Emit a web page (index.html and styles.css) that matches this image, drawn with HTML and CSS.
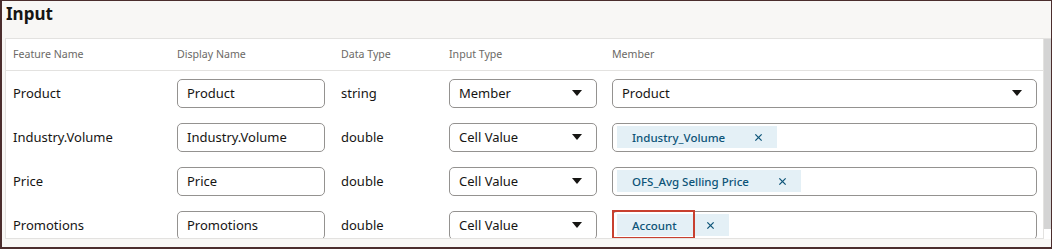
FILE: index.html
```html
<!DOCTYPE html>
<html>
<head>
<meta charset="utf-8">
<link rel="stylesheet" href="styles.css">
</head>
<body>
<div class="frame">
  <div class="title">Input</div>
  <div class="panel">
    <div class="table">
      <div class="row head">
        <div class="cell">Feature Name</div>
        <div class="cell">Display Name</div>
        <div class="cell">Data Type</div>
        <div class="cell">Input Type</div>
        <div class="cell">Member</div>
      </div>
      <div class="row">
        <div class="cell">Product</div>
        <div class="cell"><div class="field">Product</div></div>
        <div class="cell">string</div>
        <div class="cell"><div class="field select">Member<span class="caret"></span></div></div>
        <div class="cell"><div class="field select wide">Product<span class="caret"></span></div></div>
      </div>
      <div class="row">
        <div class="cell">Industry.Volume</div>
        <div class="cell"><div class="field">Industry.Volume</div></div>
        <div class="cell">double</div>
        <div class="cell"><div class="field select">Cell Value<span class="caret"></span></div></div>
        <div class="cell"><div class="field chips wide"><span class="chip"><span class="chip-text">Industry_Volume</span><svg class="x" viewBox="0 0 10 10"><path d="M1.5 1.5 L8.5 8.5 M8.5 1.5 L1.5 8.5"/></svg></span></div></div>
      </div>
      <div class="row">
        <div class="cell">Price</div>
        <div class="cell"><div class="field">Price</div></div>
        <div class="cell">double</div>
        <div class="cell"><div class="field select">Cell Value<span class="caret"></span></div></div>
        <div class="cell"><div class="field chips wide"><span class="chip"><span class="chip-text">OFS_Avg Selling Price</span><svg class="x" viewBox="0 0 10 10"><path d="M1.5 1.5 L8.5 8.5 M8.5 1.5 L1.5 8.5"/></svg></span></div></div>
      </div>
      <div class="row">
        <div class="cell">Promotions</div>
        <div class="cell"><div class="field">Promotions</div></div>
        <div class="cell">double</div>
        <div class="cell"><div class="field select">Cell Value<span class="caret"></span></div></div>
        <div class="cell member-last"><div class="field chips wide"><span class="chip"><span class="chip-text">Account</span><svg class="x" viewBox="0 0 10 10"><path d="M1.5 1.5 L8.5 8.5 M8.5 1.5 L1.5 8.5"/></svg></span></div><div class="highlight"></div></div>
      </div>
    </div>
    <div class="scrollbar"><div class="thumb"></div></div>
  </div>
</div>
</body>
</html>
```
FILE: styles.css
```css
* { box-sizing: border-box; }
html, body { margin: 0; padding: 0; }
body {
  width: 1052px;
  height: 249px;
  overflow: hidden;
  font-family: "Noto Sans", "Open Sans", sans-serif;
  color: #161513;
}
.frame {
  width: 1052px;
  height: 249px;
  border: 1px solid #4b2d2d;
  border-left-width: 2px;
  border-bottom-width: 2px;
  background: #f8f7f5;
  padding: 0 0 8px 3px;
  display: flex;
  flex-direction: column;
}
.title {
  height: 37px;
  padding: 2px 0 0 1px;
  font-size: 17px;
  font-weight: 700;
  line-height: 22px;
}
.panel {
  flex: 1;
  display: flex;
  min-height: 0;
}
.table {
  flex: 1;
  background: #fff;
  border: 1px solid #e3e2e0;
  overflow: hidden;
  padding-left: 7px;
}
.row {
  display: grid;
  grid-template-columns: 164px 164px 108px 163px 425px;
  align-items: center;
  height: 44px;
  font-size: 13px;
}
.row.head {
  height: 32px;
  font-size: 10.6px;
  color: #6b6966;
  border-bottom: 1px solid #e3e2e0;
  margin-left: -7px;
  padding-left: 7px;
  padding-bottom: 1px;
}
.field {
  width: 148px;
  height: 29px;
  border: 1px solid #949290;
  border-radius: 5px;
  display: flex;
  align-items: center;
  padding: 0 9px;
  font-size: 13px;
  position: relative;
}
.field.wide { width: 425px; }
.select { justify-content: space-between; padding-right: 14px; }
.caret {
  width: 0;
  height: 0;
  border-left: 5px solid transparent;
  border-right: 5px solid transparent;
  border-top: 6px solid #161513;
}
.chips { padding: 0 4px; }
.chip {
  display: inline-flex;
  align-items: center;
  height: 22px;
  background: #e4f0f6;
  color: #0d5478;
  font-size: 11.5px;
  font-weight: 500;
  padding: 0 14px 0 15px;
}
.chip-text { margin-right: 29px; }
.x {
  width: 9px;
  height: 9px;
  stroke: #0d5478;
  stroke-width: 1.4;
  fill: none;
}
.member-last { position: relative; }
.highlight {
  position: absolute;
  left: 0;
  top: 50%;
  margin-top: -15px;
  width: 83px;
  height: 29px;
  border: 2px solid #c8402f;
}
.scrollbar {
  width: 7px;
  background: #fff;
  border-top: 1px solid #e3e2e0;
}
.thumb {
  height: 190px;
  background: #d4d4d4;
}
```
